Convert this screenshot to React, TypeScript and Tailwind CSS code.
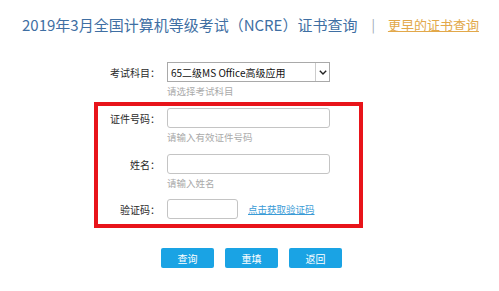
import React from "react";

const font = { fontFamily: '"Noto Sans CJK SC", "Noto Sans", sans-serif' };

function Field({ label, children, hint }: { label: string; children: React.ReactNode; hint?: string }) {
  return (
    <div className="flex">
      <div className="w-[62px] h-[20px] flex items-center justify-end text-[10px] text-[#2a2a2a] whitespace-nowrap">
        {label}
      </div>
      <div className="ml-[7px] flex flex-col">
        {children}
        {hint && <div className="mt-[3px] h-[12px] leading-[12px] text-[9.5px] text-[#aaa]">{hint}</div>}
      </div>
    </div>
  );
}

export default function App() {
  return (
    <div className="w-[499px] h-[291px] bg-white overflow-hidden" style={font}>
      <div className="flex items-center pt-[16px] pl-[22px] h-[34px]">
        <span className="text-[15px] leading-[18px] text-[#3f6fa3] whitespace-nowrap">
          2019年3月全国计算机等级考试（NCRE）证书查询
        </span>
        <span className="ml-[14px] text-[13px] text-[#9aa6b4]">|</span>
        <span className="ml-[13px] text-[13px] leading-[18px] text-[#e2a84a] underline whitespace-nowrap">
          更早的证书查询
        </span>
      </div>

      <div className="ml-[94px] w-[269px]">
        <div className="mt-[28px] px-[4px]">
          <Field label="考试科目：" hint="请选择考试科目">
            <div className="w-[163px] h-[20px] border border-[#a9a9a9] bg-white flex items-center">
              <span className="flex-1 pl-[3px] text-[10px] text-[#111] whitespace-nowrap">65二级MS Office高级应用</span>
              <div className="w-[14px] h-full border-l border-[#ccc] flex items-center justify-center">
                <svg width="8" height="5" viewBox="0 0 8 5">
                  <path d="M0.8 0.8 L4 4 L7.2 0.8" stroke="#222" strokeWidth="1.4" fill="none" />
                </svg>
              </div>
            </div>
          </Field>
        </div>

        <div className="mt-[5px] border-4 border-[#e8141a] pt-[2px] pb-[5px]">
          <Field label="证件号码：" hint="请输入有效证件号码">
            <div className="w-[163px] h-[20px] border border-[#c4c4c4] rounded-[3px] bg-white" />
          </Field>
          <div className="mt-[11px]">
            <Field label="姓名：" hint="请输入姓名">
              <div className="w-[163px] h-[20px] border border-[#c4c4c4] rounded-[3px] bg-white" />
            </Field>
          </div>
          <div className="mt-[10px]">
            <Field label="验证码：">
              <div className="flex items-center">
                <div className="w-[71px] h-[20px] border border-[#c4c4c4] rounded-[3px] bg-white" />
                <span className="ml-[10px] text-[9.5px] text-[#3a9bd6] underline whitespace-nowrap">点击获取验证码</span>
              </div>
            </Field>
          </div>
        </div>
      </div>

      <div className="mt-[20px] ml-[161px] flex gap-[11px]">
        {["查询", "重填", "返回"].map((t) => (
          <div
            key={t}
            className="w-[53px] h-[20px] rounded-[2px] bg-[#1aa3e4] text-white text-[10px] flex items-center justify-center"
          >
            {t}
          </div>
        ))}
      </div>
    </div>
  );
}
